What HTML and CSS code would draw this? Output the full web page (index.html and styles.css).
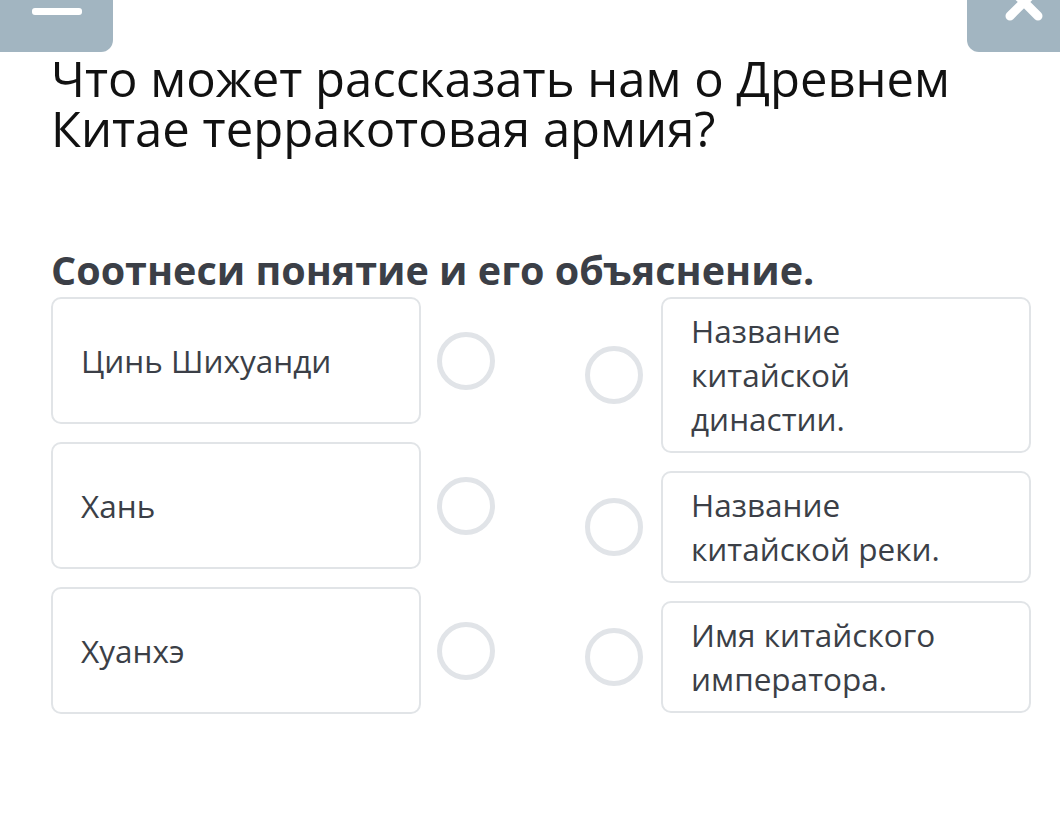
FILE: index.html
```html
<!DOCTYPE html>
<html lang="ru">
<head>
<meta charset="utf-8">
<title>Соотнеси</title>
<link rel="stylesheet" href="styles.css">
</head>
<body>
<div class="topbar">
  <div class="btn btn-left"><span class="minus"></span></div>
  <div class="btn btn-right">
    <svg class="close" width="60" height="30" viewBox="0 0 60 30"><path d="M16 -12 L44 16 M44 -12 L16 16" stroke="#fff" stroke-width="9" stroke-linecap="round" fill="none"/></svg>
  </div>
</div>
<div class="content">
  <h1 class="title">Что может рассказать нам о Древнем Китае терракотовая армия?</h1>
  <h2 class="subtitle">Соотнеси понятие и его объяснение.</h2>
  <div class="match">
    <div class="group group-left">
      <div class="row"><div class="card card-term">Цинь Шихуанди</div><span class="dot"></span></div>
      <div class="row"><div class="card card-term">Хань</div><span class="dot"></span></div>
      <div class="row"><div class="card card-term">Хуанхэ</div><span class="dot"></span></div>
    </div>
    <div class="group group-right">
      <div class="row"><span class="dot"></span><div class="card card-def">Название китайской династии.</div></div>
      <div class="row"><span class="dot"></span><div class="card card-def">Название китайской реки.</div></div>
      <div class="row"><span class="dot"></span><div class="card card-def">Имя китайского императора.</div></div>
    </div>
  </div>
</div>
</body>
</html>
```
FILE: styles.css
```css
html, body {
  margin: 0;
  padding: 0;
  background: #ffffff;
}
body {
  font-family: "Open Sans", "Noto Sans", sans-serif;
  color: #3b3f47;
}
.topbar {
  display: flex;
  justify-content: space-between;
  height: 52px;
}
.btn {
  background: #a2b5c1;
  height: 52px;
  position: relative;
  overflow: hidden;
}
.btn-left {
  width: 113px;
  border-bottom-right-radius: 12px;
}
.btn-right {
  width: 93px;
  border-bottom-left-radius: 12px;
}
.minus {
  position: absolute;
  left: 32px;
  top: 8px;
  width: 50px;
  height: 7px;
  background: #fff;
  border-radius: 3px;
}
.close {
  position: absolute;
  left: 27px;
  top: 0;
}
.content {
  padding: 0 29px 0 51px;
}
.title {
  margin: 1px 0 0 0;
  font-weight: 400;
  font-size: 49px;
  line-height: 50px;
  color: #111111;
}
.subtitle {
  margin: 94px 0 0 0;
  font-weight: 700;
  font-size: 39.5px;
  line-height: 46px;
  color: #3b3f47;
  letter-spacing: 0;
}
.match {
  margin-top: 4px;
  display: flex;
  justify-content: space-between;
}
.group {
  display: flex;
  flex-direction: column;
  gap: 18px;
}
.row {
  display: flex;
  align-items: center;
}
.group-left .row {
  gap: 16px;
}
.group-right .row {
  gap: 18px;
}
.card {
  box-sizing: border-box;
  width: 370px;
  border: 2px solid #e1e4e7;
  border-radius: 10px;
  background: #fff;
  font-size: 31.5px;
  line-height: 44px;
  color: #3b3f47;
}
.card-term {
  height: 127px;
  display: flex;
  align-items: center;
  padding: 0 28px;
}
.card-def {
  padding: 10px 28px 10px 28px;
}
.dot {
  box-sizing: border-box;
  width: 58px;
  height: 58px;
  border: 5px solid #e1e4e8;
  border-radius: 50%;
  flex: none;
}
```
